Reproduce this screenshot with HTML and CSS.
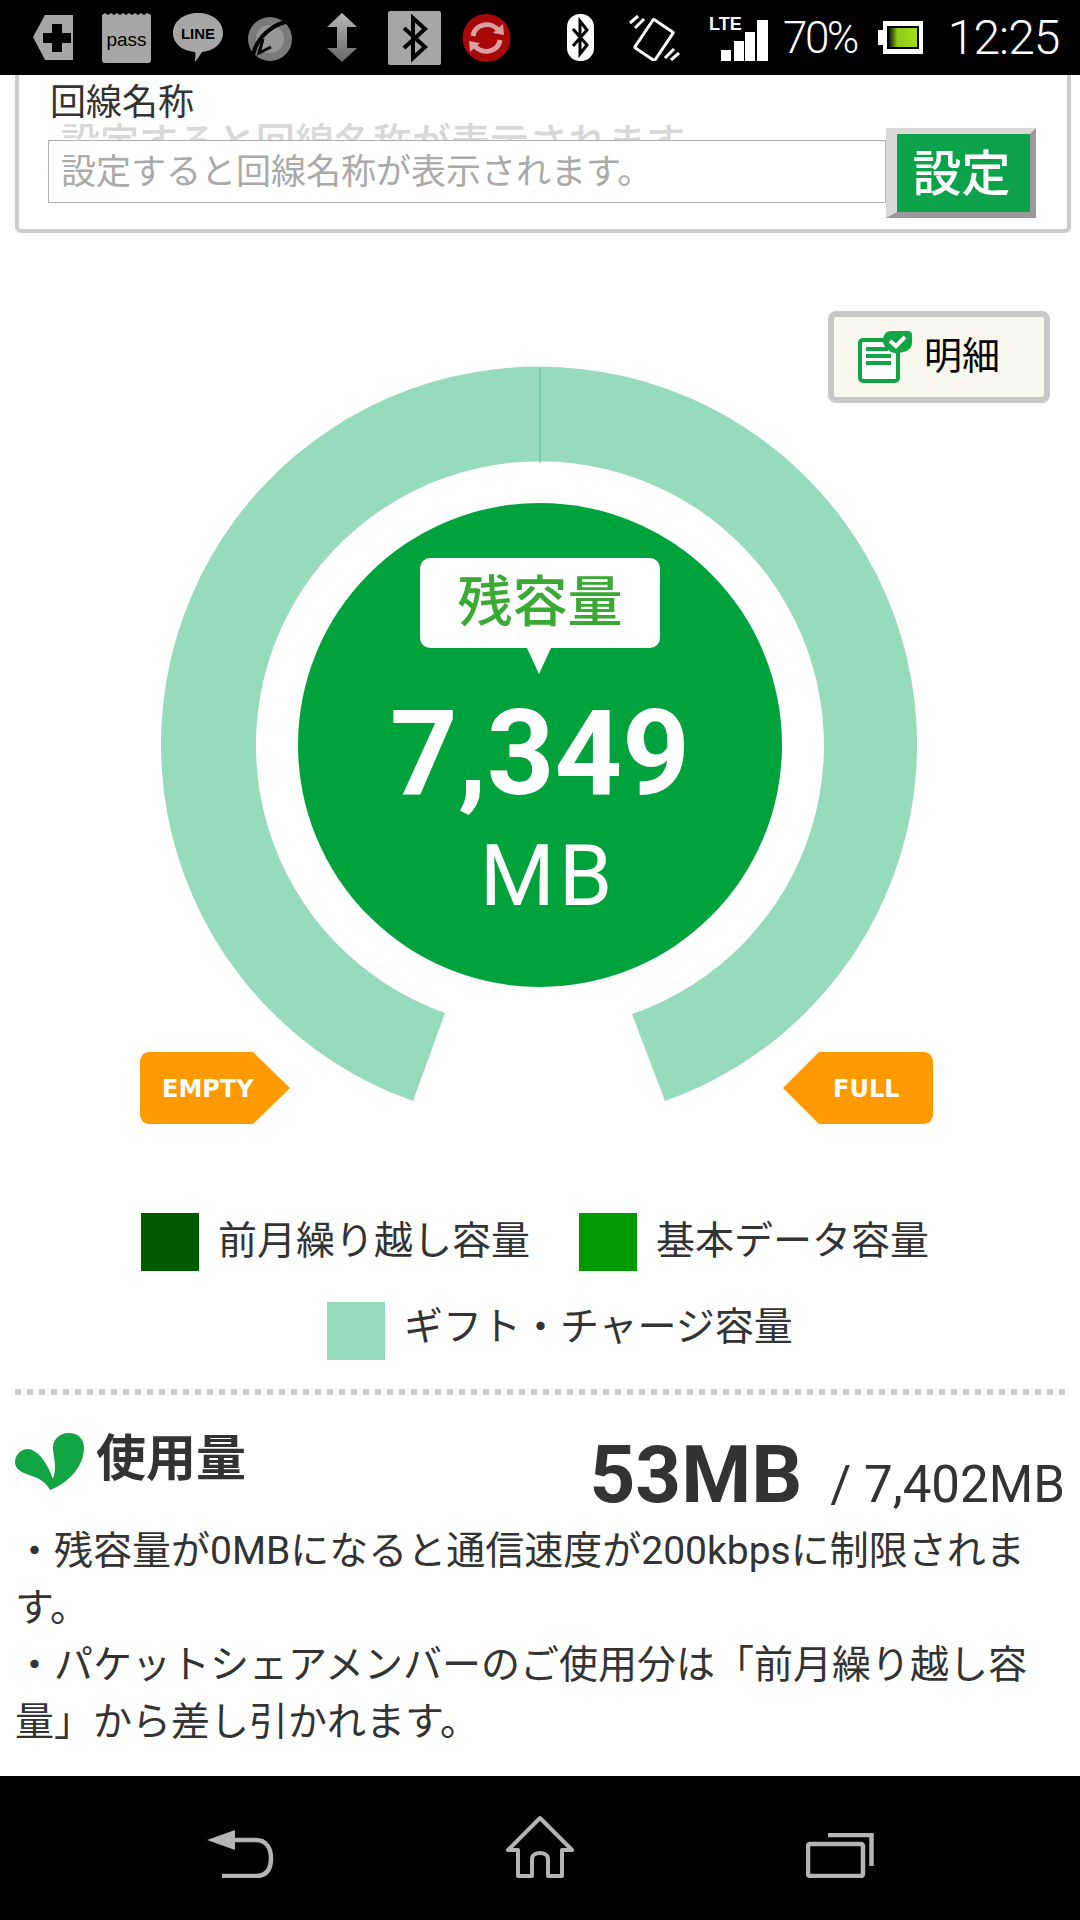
FILE: index.html
```html
<!DOCTYPE html>
<html lang="ja">
<head>
    <meta charset="UTF-8">
    <meta name="viewport" content="width=device-width, initial-scale=1.0">
    <title>残容量</title>
    <link rel="stylesheet" href="styles.css">
</head>
<body>
    <div class="screen">
        <!-- Status bar -->
        <header class="status-bar">
            <svg class="ic-plus" width="40" height="45" viewBox="0 0 40 45"><path d="M12 0H40V45H12L0 22Z" fill="#a6a6a6"/><path d="M19 9H29V18H38V28H29V37H19V28H10V18H19Z" fill="#000"/></svg>
            <svg class="ic-pass" width="49" height="50" viewBox="0 0 49 50"><path d="M0 2 3 0 6 2 9 0 12 2 15 0 18 2 21 0 24 2 27 0 30 2 33 0 36 2 39 0 42 2 45 0 49 2V47Q49 50 46 50H3Q0 50 0 47Z" fill="#a6a6a6"/><text x="24.5" y="33" class="ic-text" font-size="19" text-anchor="middle">pass</text></svg>
            <svg class="ic-line" width="50" height="49" viewBox="0 0 50 49"><path d="M25 0C39 0 50 8 50 20 50 31 40 38 29 39 27 42 24 47 22 49 22 45 23 41 22 39 10 38 0 31 0 20 0 8 11 0 25 0Z" fill="#a6a6a6"/><text x="25" y="26" class="ic-text ic-bold" font-size="15" text-anchor="middle">LINE</text></svg>
            <svg class="ic-trend" width="47" height="46" viewBox="0 0 47 46"><circle cx="23" cy="24" r="22" fill="#7a7a7a"/><circle cx="23" cy="24" r="14" fill="#979797"/><path d="M6 40C10 22 26 8 44 6" fill="none" stroke="#000" stroke-width="4"/><path d="M16 24 12 38 24 32" fill="none" stroke="#000" stroke-width="3"/></svg>
            <svg class="ic-arrows" width="30" height="49" viewBox="0 0 30 49"><defs><linearGradient id="arrowfade" x1="0" y1="0" x2="0" y2="1"><stop offset="0" stop-color="#b8b8b8"/><stop offset="1" stop-color="#666"/></linearGradient></defs><path d="M15 0 30 14H20V35H30L15 49 0 35H10V14H0Z" fill="url(#arrowfade)"/></svg>
            <svg class="ic-btsq" width="53" height="54" viewBox="0 0 53 54"><rect width="53" height="54" rx="2" fill="#a6a6a6"/><path d="M16 17 37 36 25 47V7L37 18 16 37" fill="none" stroke="#000" stroke-width="4"/></svg>
            <svg class="ic-sync" width="49" height="50" viewBox="0 0 49 50"><circle cx="24.5" cy="25" r="24" fill="#a80808"/><path d="M11 23C13 10 30 8 37 18M38 27C36 40 19 42 12 32" fill="none" stroke="#d8a0a0" stroke-width="5"/><path d="M31 20 42 22 41 11ZM18 30 7 28 8 39Z" fill="#d8a0a0"/></svg>

            <svg class="ic-bt" width="27" height="47" viewBox="0 0 27 47"><rect width="27" height="47" rx="13" fill="#fff"/><path d="M6 15 20 31 13 40V7L20 16 6 32" fill="none" stroke="#000" stroke-width="3"/></svg>
            <svg class="ic-vibe" width="51" height="47" viewBox="0 0 51 47"><g fill="none" stroke="#fff" stroke-width="3"><rect x="13" y="9" width="24" height="34" rx="1" transform="rotate(34 25 26)"/><path d="M1 9 9 2M6 14 15 5M36 44 45 35M42 46 50 39"/></g></svg>
            <svg class="ic-signal" width="59" height="47" viewBox="0 0 59 47"><text x="0" y="16" class="ic-lte" font-size="18">LTE</text><path d="M12 36H22V47H12ZM25 27H35V47H25ZM36 18H46V47H36ZM48 6H59V47H48Z" fill="#fff"/></svg>
            <span class="status-pct">70%</span>
            <svg class="ic-battery" width="45" height="33" viewBox="0 0 45 33"><defs><linearGradient id="batfill" x1="0" y1="0" x2="1" y2="0"><stop offset="0" stop-color="#111"/><stop offset=".3" stop-color="#8ecb12"/><stop offset="1" stop-color="#a4dc1e"/></linearGradient></defs><path d="M5 0H45V33H5V24H0V9H5Z" fill="#fff"/><rect x="9" y="5" width="32" height="23" fill="#000"/><rect x="11" y="7" width="28" height="19" fill="url(#batfill)"/></svg>
            <span class="status-time">12:25</span>
        </header>

        <main class="content">
            <!-- Line name card -->
            <section class="line-card">
                <div class="line-label">回線名称</div>
                <div class="line-ghost">設定すると回線名称が表示されます。</div>
                <div class="line-form">
                    <div class="line-input">設定すると回線名称が表示されます。</div>
                    <button class="line-btn" type="button">設定</button>
                </div>
            </section>

            <!-- Gauge -->
            <section class="gauge">
                <svg class="gauge-ring" width="1080" height="967" viewBox="0 233 1080 967">
                    <path d="M413 1101A378 378 0 1 1 665 1101L632 1014A284 284 0 1 0 445 1013Z" fill="#96dbbb"/>
                    <path d="M540 368V463" stroke="#5fc08f" stroke-width="1"/>
                </svg>

                <a class="detail-btn">
                    <svg width="54" height="52" viewBox="0 0 54 52"><rect x="2" y="9" width="38" height="41" rx="3" fill="#fff" stroke="#12a544" stroke-width="4"/><path d="M8 18H30M8 25H33M8 32H33" stroke="#12a544" stroke-width="4"/><path d="M33 0H50Q54 0 54 4V12C54 19 46 22 37 22 30 21 25 15 25 10 25 4 28 0 33 0Z" fill="#12a544"/><path d="M32 10 38 15 47 6" fill="none" stroke="#fff" stroke-width="4"/></svg>
                    <span>明細</span>
                </a>

                <div class="gauge-center">
                    <div class="gauge-bubble">残容量</div>
                    <div class="gauge-value">7,349</div>
                    <div class="gauge-unit">MB</div>
                </div>

                <div class="tag tag-empty">EMPTY</div>
                <div class="tag tag-full">FULL</div>
            </section>

            <!-- Legend -->
            <section class="legend">
                <div class="legend-row legend-row-a">
                    <div class="legend-item"><i class="swatch swatch-carry"></i><span>前月繰り越し容量</span></div>
                    <div class="legend-item"><i class="swatch swatch-base"></i><span>基本データ容量</span></div>
                </div>
                <div class="legend-row legend-row-b">
                    <div class="legend-item"><i class="swatch swatch-gift"></i><span>ギフト・チャージ容量</span></div>
                </div>
            </section>

            <!-- Usage -->
            <section class="usage">
                <div class="usage-head">
                    <div class="usage-title">
                        <svg width="69" height="58" viewBox="0 0 69 58"><path d="M35 57C52 51 69 34 69 15 69 5 62 0 54 0 44 0 37 7 38 17 39 26 42 34 38 46 33 32 24 17 13 16 5 16 0 23 0 29 0 36 6 39 14 42 24 45 31 49 35 57Z" fill="#12a544"/></svg>
                        <h2>使用量</h2>
                    </div>
                    <div class="usage-amount"><strong>53MB</strong><span>/ 7,402MB</span></div>
                </div>
                <p>・残容量が0MBになると通信速度が200kbpsに制限されます。</p>
                <p>・パケットシェアメンバーのご使用分は「前月繰り越し容量」から差し引かれます。</p>
            </section>
        </main>

        <!-- Navigation bar -->
        <footer class="nav-bar">
            <svg width="68" height="48" viewBox="0 0 68 48"><path d="M1 10 29 0V20Z" fill="#b4b4b4"/><path d="M28 10H50C60 10 65 18 65 28 65 40 60 46 50 46H16" fill="none" stroke="#b4b4b4" stroke-width="4.500"/></svg>
            <svg width="68" height="63" viewBox="0 0 68 63"><path d="M34 3 66 35H56V61H42V44C42 36 26 36 26 44V61H12V35H2Z" fill="none" stroke="#b4b4b4" stroke-width="4" stroke-linejoin="round"/></svg>
            <svg width="68" height="45" viewBox="0 0 68 45"><path d="M22 2H65.500V33" fill="none" stroke="#b4b4b4" stroke-width="4.500"/><rect x="2" y="11" width="55" height="32" rx="2" fill="none" stroke="#b4b4b4" stroke-width="4.500"/></svg>
        </footer>
    </div>
</body>
</html>
```

FILE: styles.css
```css
/* Basic Reset */
* {
    margin: 0;
    padding: 0;
    box-sizing: border-box;
}

body {
    font-family: Roboto, "Noto Sans CJK JP", sans-serif;
    color: #333;
    background-color: #fff;
}

.screen {
    width: 1080px;
    height: 1920px;
    display: flex;
    flex-direction: column;
    overflow: hidden;
}

/* Status Bar */
.status-bar {
    height: 75px;
    flex: none;
    display: flex;
    align-items: center;
    padding-left: 33px;
    background-color: #000;
    color: #fff;
}

.ic-pass { margin-left: 29px; }
.ic-line { margin-left: 22px; }
.ic-trend { margin-left: 24px; }
.ic-arrows { margin-left: 33px; }
.ic-btsq { margin-left: 31px; }
.ic-sync { margin-left: 21px; }
.ic-bt { margin-left: 56px; }
.ic-vibe { margin-left: 35px; }
.ic-signal { margin-left: 29px; }
.ic-battery { margin-left: 21px; }

.ic-text {
    font-family: "Liberation Sans", sans-serif;
    fill: #000;
}

.ic-bold {
    font-weight: bold;
}

.ic-lte {
    font-family: "Liberation Sans", sans-serif;
    font-weight: bold;
    fill: #fff;
}

.status-pct {
    margin-left: 15px;
    font-size: 44px;
    font-weight: 300;
    letter-spacing: -2.500px;
}

.status-time {
    margin-left: 25px;
    font-size: 48px;
    font-weight: 300;
    letter-spacing: -1px;
}

/* Main Content */
.content {
    flex: 1;
    min-height: 0;
}

/* Line Name Card */
.line-card {
    height: 158px;
    margin: 0 9px 0 15px;
    padding: 8px 0 0 31px;
    position: relative;
    border: 4px solid #ccc;
    border-top: none;
    border-radius: 0 0 6px 6px;
}

.line-label {
    font-size: 36px;
    line-height: 40px;
    color: #333;
}

.line-ghost {
    height: 17px;
    margin-left: 11px;
    font-size: 39px;
    line-height: 40px;
    font-weight: 500;
    color: #d8d8d8;
    white-space: nowrap;
    overflow: hidden;
}

.line-form {
    position: absolute;
    top: 53px;
    left: 29px;
    display: flex;
    align-items: flex-start;
}

.line-input {
    width: 838px;
    height: 63px;
    margin-top: 12px;
    padding-left: 12px;
    font-size: 35px;
    line-height: 63px;
    color: #aaa;
    background-color: #fff;
    border: 1px solid #b0b0b0;
}

.line-btn {
    width: 150px;
    height: 90px;
    padding: 0 4px 7px 0;
    font-family: inherit;
    font-size: 49px;
    font-weight: 500;
    color: #fff;
    background-color: #0ba24a;
    border-style: solid;
    border-width: 6px 6px 6px 11px;
    border-color: #d9d9d9 #999 #999 #d9d9d9;
}

/* Gauge */
.gauge {
    height: 967px;
    position: relative;
}

.gauge-ring {
    display: block;
}

.detail-btn {
    position: absolute;
    top: 78px;
    left: 828px;
    width: 222px;
    height: 92px;
    display: flex;
    align-items: center;
    padding-left: 24px;
    gap: 12px;
    font-size: 38px;
    color: #000;
    background-color: #f8f8ee;
    border: 6px solid #c8c8c8;
    border-radius: 8px;
}

.detail-btn span {
    padding-bottom: 10px;
}

.gauge-center {
    position: absolute;
    top: 270px;
    left: 298px;
    width: 484px;
    height: 484px;
    display: flex;
    flex-direction: column;
    align-items: center;
    padding-top: 55px;
    color: #fff;
    background-color: #00a23b;
    border-radius: 50%;
}

.gauge-bubble {
    width: 240px;
    height: 90px;
    position: relative;
    font-size: 55px;
    line-height: 88px;
    font-weight: 500;
    text-align: center;
    color: #3aaa35;
    background-color: #fff;
    border-radius: 10px;
}

.gauge-bubble::after {
    content: "";
    position: absolute;
    top: 90px;
    left: 107px;
    border-style: solid;
    border-width: 26px 12px 0;
    border-color: #fff transparent transparent;
}

.gauge-value {
    margin-top: 47px;
    font-size: 118px;
    line-height: 118px;
    font-weight: 700;
}

.gauge-unit {
    margin: 13px 0 0 16px;
    font-size: 86px;
    line-height: 100px;
    font-weight: 400;
    letter-spacing: 4px;
}

.tag {
    position: absolute;
    top: 819px;
    width: 150px;
    height: 72px;
    display: flex;
    align-items: center;
    padding-top: 2px;
    font-family: "DejaVu Sans", sans-serif;
    font-size: 24px;
    font-weight: bold;
    color: #fff;
    background-color: #ff9a00;
}

.tag-empty {
    left: 140px;
    padding-left: 22px;
    clip-path: polygon(8px 0, 113px 0, 150px 36px, 113px 72px, 8px 72px, 3px 70px, 0 64px, 0 8px, 3px 2px);
}

.tag-full {
    left: 783px;
    padding-left: 50px;
    clip-path: polygon(36px 0, 142px 0, 147px 2px, 150px 8px, 150px 64px, 147px 70px, 142px 72px, 36px 72px, 0 36px);
}

/* Legend */
.legend {
    height: 188px;
    margin-top: 13px;
}

.legend-row {
    display: flex;
    gap: 49px;
    font-size: 39px;
    color: #333;
}

.legend-row-a {
    padding-left: 141px;
}

.legend-row-a span {
    padding-bottom: 10px;
}

.legend-row-b {
    margin-top: 31px;
    padding-left: 327px;
}

.legend-row-b span {
    padding-bottom: 16px;
}

.legend-item {
    height: 58px;
    display: flex;
    align-items: center;
    gap: 19px;
}

.swatch {
    width: 58px;
    height: 58px;
}

.swatch-carry { background-color: #005a00; }
.swatch-base { background-color: #009a00; }
.swatch-gift { background-color: #96dbbb; }

/* Usage */
.usage {
    margin: -12px 15px 0;
    padding-top: 30px;
    padding-right: 10px;
    font-size: 39px;
    line-height: 57px;
    background-image: repeating-linear-gradient(to right, #ccc 0, #ccc 6px, transparent 6px, transparent 12px);
    background-size: 100% 6px;
    background-repeat: no-repeat;
}

.usage-head {
    height: 104px;
    display: flex;
    justify-content: space-between;
    margin-right: -10px;
}

.usage-title {
    display: flex;
    align-items: flex-start;
    gap: 12px;
    padding-top: 14px;
}

.usage-title h2 {
    font-size: 50px;
    line-height: 52px;
    font-weight: 700;
}

.usage-amount {
    display: flex;
    align-items: baseline;
    gap: 28px;
    padding-top: 10px;
}

.usage-amount strong {
    font-size: 80px;
    line-height: 92px;
}

.usage-amount span {
    font-size: 51px;
}

/* Navigation Bar */
.nav-bar {
    height: 144px;
    flex: none;
    display: flex;
    justify-content: space-between;
    align-items: flex-end;
    padding: 0 206px 42px;
    background-color: #000;
}
```
